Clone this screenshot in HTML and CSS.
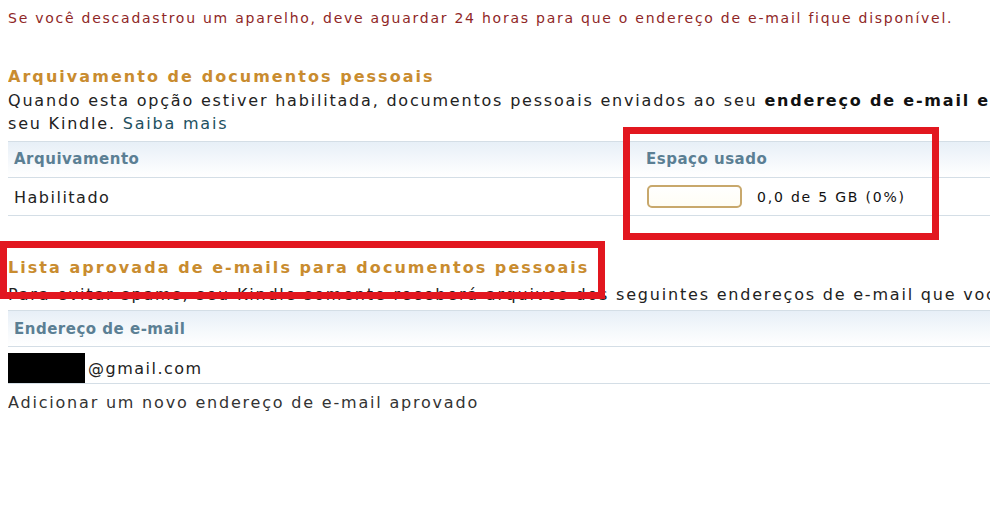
FILE: index.html
```html
<!DOCTYPE html>
<html lang="pt-BR">
<head>
<meta charset="utf-8">
<title>Documentos pessoais</title>
<link rel="stylesheet" href="styles.css">
</head>
<body>
<div class="page">
  <p class="notice">Se você descadastrou um aparelho, deve aguardar 24 horas para que o endereço de e-mail fique disponível.</p>

  <section class="section">
    <h2 class="section-title first">Arquivamento de documentos pessoais</h2>
    <p class="desc">
      <span class="line">Quando esta opção estiver habilitada, documentos pessoais enviados ao seu <b>endereço de e-mail e</b></span>
      <span class="line">seu Kindle. <a class="link" href="#">Saiba mais</a></span>
    </p>
    <div class="grid grid-archive">
      <div class="grid-head">
        <div class="th">Arquivamento</div>
        <div class="th">Espaço usado</div>
      </div>
      <div class="grid-row archive-row">
        <div class="td td-status">Habilitado</div>
        <div class="td td-usage">
          <span class="meter"></span>
          <span class="usage-text">0,0 de 5 GB (0%)</span>
        </div>
      </div>
    </div>
  </section>

  <section class="section">
    <h2 class="section-title second">Lista aprovada de e-mails para documentos pessoais</h2>
    <p class="desc desc-list">
      <span class="line">Para evitar spams, seu Kindle somente receberá arquivos dos seguintes endereços de e-mail que você aprovou.</span>
    </p>
    <div class="grid grid-list">
      <div class="grid-head single">
        <div class="th th-list">Endereço de e-mail</div>
      </div>
      <div class="grid-row email-row">
        <span class="redact"></span>
        <span class="email">@gmail.com</span>
      </div>
    </div>
    <a class="add" href="#">Adicionar um novo endereço de e-mail aprovado</a>
  </section>
</div>

<div class="callout callout-usage"></div>
<div class="callout callout-list"></div>
</body>
</html>
```

FILE: styles.css
```css
html, body {
  margin: 0;
  padding: 0;
  background: #ffffff;
}

body {
  font-family: "DejaVu Sans", Verdana, sans-serif;
  color: #222222;
  width: 1000px;
  height: 510px;
  overflow: hidden;
}

.page {
  width: 982px;
  margin-left: 8px;
  overflow: hidden;
}

.notice {
  margin: 9px 0 0;
  font-size: 14px;
  line-height: 18px;
  letter-spacing: 1.75px;
  color: #8f2727;
  white-space: nowrap;
}

.section-title {
  margin: 0;
  font-size: 16px;
  line-height: 20px;
  font-weight: bold;
  letter-spacing: 2.05px;
  color: #c98c2f;
  white-space: nowrap;
}

.section-title.first {
  margin-top: 40px;
}

.section-title.second {
  margin-top: 42px;
}

.desc {
  margin: 2px 0 0;
  font-size: 16px;
  line-height: 23px;
  letter-spacing: 1.8px;
  color: #222222;
}

.desc-list {
  margin-top: 5px;
}

.line {
  display: block;
  white-space: nowrap;
}

.desc b {
  color: #111111;
}

.link {
  color: #22505f;
  text-decoration: none;
}

.grid {
  border-top: 1px solid #d4dee6;
}

.grid-archive {
  margin-top: 6px;
}

.grid-list {
  margin-top: 4px;
}

.grid-head {
  display: grid;
  grid-template-columns: 632px 1fr;
  height: 35px;
  border-bottom: 1px solid #d4dee6;
  background: linear-gradient(to bottom, #e7eff7 0%, #f6f9fc 60%, #ffffff 100%);
}

.grid-head.single {
  grid-template-columns: 1fr;
}

.th {
  padding-left: 6px;
  font-size: 15px;
  line-height: 35px;
  font-weight: bold;
  color: #5b7f94;
  letter-spacing: 0.5px;
  white-space: nowrap;
}

.th-list {
  padding-top: 2px;
  line-height: 33px;
}

.grid-row {
  border-bottom: 1px solid #d4dee6;
}

.archive-row {
  display: grid;
  grid-template-columns: 632px 1fr;
  height: 37px;
}

.td-status {
  padding: 2px 0 0 6px;
  font-size: 16px;
  line-height: 35px;
  letter-spacing: 1.5px;
}

.td-usage {
  display: flex;
  align-items: center;
  padding-left: 7px;
}

.meter {
  width: 91px;
  height: 19px;
  border: 2px solid #c8a86c;
  border-radius: 5px;
  background: linear-gradient(to bottom, #ffffff 0%, #fffdf4 100%);
}

.usage-text {
  margin-left: 15px;
  font-size: 14px;
  line-height: 18px;
  letter-spacing: 1.8px;
  color: #111111;
  white-space: nowrap;
}

.email-row {
  display: flex;
  align-items: flex-start;
  height: 36px;
}

.redact {
  width: 80px;
  height: 30px;
  margin: 6px 0 0 -3px;
  background: #000000;
}

.email {
  margin: 10px 0 0 3px;
  font-size: 16px;
  line-height: 23px;
  letter-spacing: 1.5px;
  color: #222222;
}

.add {
  display: block;
  margin-top: 7px;
  font-size: 16px;
  line-height: 23px;
  letter-spacing: 1.8px;
  color: #333333;
  text-decoration: none;
  white-space: nowrap;
}

.callout {
  position: absolute;
  box-sizing: border-box;
  border: 7px solid #e2171f;
  z-index: 2;
}

.callout-usage {
  left: 623px;
  top: 127px;
  width: 316px;
  height: 113px;
}

.callout-list {
  left: 0;
  top: 241px;
  width: 605px;
  height: 58px;
}
```
